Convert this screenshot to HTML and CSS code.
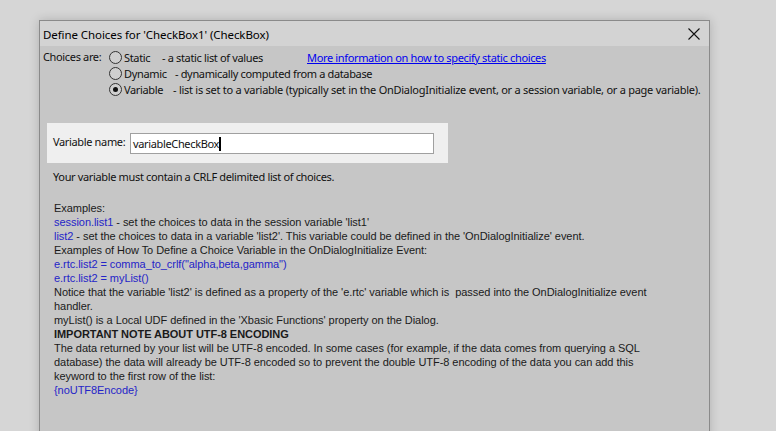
FILE: index.html
```html
<!DOCTYPE html>
<html>
<head>
<meta charset="utf-8">
<link rel="stylesheet" href="styles.css">
</head>
<body>
<div class="dialog">
  <div class="titlebar">
    <span class="title">Define Choices for 'CheckBox1' (CheckBox)</span>
    <svg class="close" width="12" height="12" viewBox="0 0 12 12"><path d="M0.5 0.5 L11.5 11.5 M11.5 0.5 L0.5 11.5" stroke="#111" stroke-width="1.1" fill="none"/></svg>
  </div>
  <div class="content">
    <div class="choices">
      <div class="choices-label">Choices are:</div>
      <div class="options">
        <div class="opt">
          <span class="radio"></span><span class="opt-name w-static">Static</span><span class="desc-static">- a static list of values</span>
          <a class="link" href="#">More information on how to specify static choices</a>
        </div>
        <div class="opt">
          <span class="radio"></span><span class="opt-name w-dynamic">Dynamic</span><span>- dynamically computed from a database</span>
        </div>
        <div class="opt">
          <span class="radio checked"></span><span class="opt-name w-variable">Variable</span><span class="desc-var">- list is set to a variable (typically set in the OnDialogInitialize event, or a session variable, or a page variable).</span>
        </div>
      </div>
    </div>

    <div class="varpanel">
      <span class="var-label">Variable name:</span>
      <div class="input"><span>variableCheckBox</span><span class="caret"></span></div>
    </div>

    <p class="note">Your variable must contain a CRLF delimited list of choices.</p>

    <div class="help">
      <div>Examples:</div>
      <div><span class="code">session.list1</span> - set the choices to data in the session variable 'list1'</div>
      <div><span class="code">list2</span> - set the choices to data in a variable 'list2'. This variable could be defined in the 'OnDialogInitialize' event.</div>
      <div>Examples of How To Define a Choice Variable in the OnDialogInitialize Event:</div>
      <div class="code">e.rtc.list2 = comma_to_crlf("alpha,beta,gamma")</div>
      <div class="code">e.rtc.list2 = myList()</div>
      <div>Notice that the variable 'list2' is defined as a property of the 'e.rtc' variable which is&nbsp; passed into the OnDialogInitialize event<br>handler.</div>
      <div>myList() is a Local UDF defined in the 'Xbasic Functions' property on the Dialog.</div>
      <div class="bold">IMPORTANT NOTE ABOUT UTF-8 ENCODING</div>
      <div>The data returned by your list will be UTF-8 encoded. In some cases (for example, if the data comes from querying a SQL<br>database) the data will already be UTF-8 encoded so to prevent the double UTF-8 encoding of the data you can add this<br>keyword to the first row of the list:</div>
      <div class="code">{noUTF8Encode}</div>
    </div>
  </div>
</div>
</body>
</html>
```

FILE: styles.css
```css
html, body {
  margin: 0;
  padding: 0;
  background: #d6d6d6;
  overflow: hidden;
}
body {
  width: 776px;
  height: 431px;
  font-family: "Noto Sans", "DejaVu Sans", sans-serif;
  font-size: 11px;
  letter-spacing: -0.35px;
  color: #111;
}
.dialog {
  margin: 20px 0 0 39px;
  width: 669px;
  height: 420px;
  border: 1px solid #8a8a8a;
  border-bottom: none;
  background: #c6c6c6;
  box-shadow: 0 0 10px rgba(0,0,0,0.18);
}
.titlebar {
  height: 25px;
  background: #d3d3d3;
  display: flex;
  align-items: center;
  justify-content: space-between;
  padding: 0 9px 0 3px;
}
.title {
  font-size: 11.5px;
  letter-spacing: -0.08px;
  color: #000;
  padding-top: 1px;
  white-space: nowrap;
}
.close { margin-top: 1px; }
.content {
  padding: 3px 0 0 0;
}
.choices {
  display: flex;
  padding-left: 3px;
}
.choices-label {
  width: 66px;
  flex: none;
  white-space: nowrap;
  line-height: 16px;
}
.options { display: flex; flex-direction: column; }
.opt {
  display: flex;
  align-items: center;
  height: 16px;
  white-space: nowrap;
}
.radio {
  width: 11px;
  height: 11px;
  border: 1px solid #333;
  border-radius: 50%;
  background: #cfcfcf;
  margin-right: 2px;
  position: relative;
  flex: none;
}
.radio.checked::after {
  content: "";
  position: absolute;
  left: 3px;
  top: 3px;
  width: 5px;
  height: 5px;
  border-radius: 50%;
  background: #111;
}
.opt-name { display: inline-block; flex: none; }
.w-static { width: 38px; }
.w-dynamic { width: 51px; }
.w-variable { width: 49px; }
.desc-static { display: inline-block; width: 145px; flex: none; }
.desc-var { letter-spacing: -0.26px; }
.link {
  color: #0000ee;
  text-decoration: underline;
}
.varpanel {
  margin: 26px 0 0 7px;
  height: 40px;
  background: #efefef;
  display: flex;
  align-items: center;
  padding-left: 6px;
  box-sizing: border-box;
  width: 401px;
}
.var-label { width: 77px; flex: none; white-space: nowrap; margin-top: -4px; }
.input {
  width: 300px;
  height: 19px;
  border: 1px solid #a0a0a0;
  background: #fff;
  display: flex;
  align-items: center;
  padding-left: 2px;
  flex: none;
  box-sizing: content-box;
  margin-top: 1px;
}
.caret {
  display: inline-block;
  width: 2px;
  height: 14px;
  background: #000;
}
.note {
  margin: 6px 0 0 13px;
  line-height: 16px;
}
.help {
  margin: 16px 0 0 14px;
  font-family: "Liberation Sans", Arial, sans-serif;
  font-size: 11px;
  letter-spacing: -0.05px;
  line-height: 14px;
  color: #1a1a1a;
}
.code { color: #2424c8; }
.bold { font-weight: bold; }
```
